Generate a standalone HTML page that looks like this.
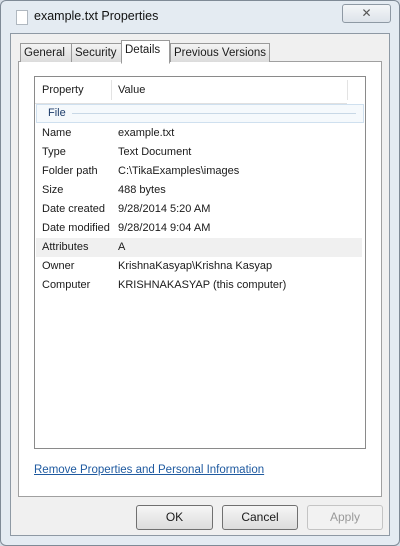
<!DOCTYPE html><html><head><style>
body{margin:0;width:400px;height:546px;background:#d6dde6;font-family:"Liberation Sans",sans-serif;font-size:11px;color:#1a1a1a;position:relative;overflow:hidden}
.a{position:absolute;white-space:nowrap}
.win{left:0;top:0;width:398px;height:544px;border:1px solid #7f8a96;border-radius:6px;background:#e4ebf2}
.inner{left:10px;top:33px;width:378px;height:501px;background:#f0f0f0;border:1px solid #8e99a4}
.page{left:18px;top:61px;width:362px;height:434px;background:#fff;border:1px solid #a0a0a0}
.tab{top:43px;height:18px;border:1px solid #9a9a9a;border-bottom:none;background:linear-gradient(#f4f4f4,#dcdcdc);line-height:19px;padding:0 3px;font-size:11.5px}
.list{left:34px;top:76px;width:330px;height:371px;border:1px solid #8a8a8a;background:#fff}
.row{left:42px;height:19px;line-height:19px}
.v{left:118px}
.btn{top:505px;height:23px;border:1px solid #707070;border-radius:3px;background:linear-gradient(#f6f6f6,#dcdcdc);text-align:center;line-height:23px;font-size:12px}
</style></head><body>
<div class="a win"></div>
<div class="a" style="left:16px;top:10px;width:10px;height:13px;border:1px solid #b0b8c0;background:#fff"></div>
<div class="a" style="left:34px;top:9px;font-size:12.5px;color:#111">example.txt Properties</div>
<div class="a" style="left:342px;top:4px;width:47px;height:17px;border:1px solid #8e99a4;border-radius:3px;background:linear-gradient(#f4f6f8,#dde3ea);text-align:center;line-height:17px;color:#555;font-size:12px">✕</div>
<div class="a inner"></div>
<div class="a page"></div>
<div class="a tab" style="left:20px;width:44px">General</div>
<div class="a tab" style="left:71px;width:45px">Security</div>
<div class="a tab" style="left:170px;width:92px">Previous Versions</div>
<div class="a tab" style="left:121px;top:40px;height:22px;width:41px;background:#fff;border-bottom:1px solid #fff;z-index:2">Details</div>
<div class="a list"></div>
<div class="a" style="left:35px;top:77px;width:312px;height:26px;border-bottom:1px solid #e0e0e0"></div>
<div class="a" style="left:111px;top:80px;width:1px;height:20px;background:#e3e3e3"></div>
<div class="a" style="left:347px;top:80px;width:1px;height:20px;background:#e3e3e3"></div>
<div class="a" style="left:42px;top:84px">Property</div>
<div class="a" style="left:118px;top:84px">Value</div>
<div class="a" style="left:36px;top:104px;width:326px;height:17px;border:1px solid #cfe0ef;background:#f5f9fc"></div>
<div class="a" style="left:48px;top:107px;color:#1e3d6b">File</div>
<div class="a" style="left:72px;top:113px;width:284px;height:1px;background:#c8d8e6"></div>
<div class="a" style="left:36px;top:238px;width:326px;height:19px;background:#f0f0f0"></div>
<div class="a row" style="top:124px">Name</div><div class="a row v" style="top:124px">example.txt</div>
<div class="a row" style="top:143px">Type</div><div class="a row v" style="top:143px">Text Document</div>
<div class="a row" style="top:162px">Folder path</div><div class="a row v" style="top:162px">C:\TikaExamples\images</div>
<div class="a row" style="top:181px">Size</div><div class="a row v" style="top:181px">488 bytes</div>
<div class="a row" style="top:200px">Date created</div><div class="a row v" style="top:200px">9/28/2014 5:20 AM</div>
<div class="a row" style="top:219px">Date modified</div><div class="a row v" style="top:219px">9/28/2014 9:04 AM</div>
<div class="a row" style="top:238px">Attributes</div><div class="a row v" style="top:238px">A</div>
<div class="a row" style="top:257px">Owner</div><div class="a row v" style="top:257px">KrishnaKasyap\Krishna Kasyap</div>
<div class="a row" style="top:276px">Computer</div><div class="a row v" style="top:276px">KRISHNAKASYAP (this computer)</div>
<div class="a" style="left:34px;top:464px;color:#1f5aa0;text-decoration:underline;font-size:11.5px">Remove Properties and Personal Information</div>
<div class="a btn" style="left:136px;width:75px">OK</div>
<div class="a btn" style="left:222px;width:74px">Cancel</div>
<div class="a btn" style="left:307px;width:74px;color:#999;border-color:#c4c4c4;background:#f2f2f2">Apply</div>
</body></html>
